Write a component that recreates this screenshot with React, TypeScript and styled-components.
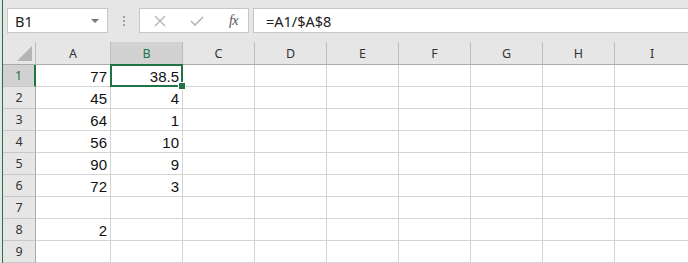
import { Fragment } from 'react'
import styled, { createGlobalStyle } from 'styled-components'

const green = '#217346'
const headerBg = '#e6e6e6'
const gridLine = '#d4d4d4'
const uiFont = `"Noto Sans", "Open Sans", "DejaVu Sans", sans-serif`
const cellFont = `"Liberation Sans", Arial, sans-serif`

const GlobalStyle = createGlobalStyle`
  html, body {
    margin: 0;
    padding: 0;
    background: ${headerBg};
    overflow: hidden;
  }
`

const Window = styled.div`
  width: 688px;
  height: 263px;
  box-sizing: border-box;
  margin-left: 2px;
  border-left: 1px solid ${green};
  background: ${headerBg};
  display: flex;
  flex-direction: column;
  overflow: hidden;
`

const FormulaBar = styled.div`
  display: flex;
  align-items: stretch;
  height: 27px;
  margin: 8px 0 9px 4px;
`

const NameBox = styled.div`
  width: 101px;
  box-sizing: border-box;
  background: #fff;
  border: 1px solid #c6c6c6;
  display: flex;
  align-items: center;
  justify-content: space-between;
  padding: 0 8px 0 7px;
  font-family: ${uiFont};
  font-size: 14.5px;
  color: #222;
`

const DropArrow = styled.span`
  width: 0;
  height: 0;
  border-left: 4px solid transparent;
  border-right: 4px solid transparent;
  border-top: 4px solid #777;
  margin-top: 1px;
`

const Grip = styled.div`
  width: 31px;
  display: flex;
  flex-direction: column;
  align-items: center;
  justify-content: center;
  gap: 2px;

  span {
    width: 2px;
    height: 2px;
    background: #a0a0a0;
  }
`

const FxBox = styled.div`
  width: 110px;
  box-sizing: border-box;
  background: #fff;
  border: 1px solid #c6c6c6;
  display: flex;
  align-items: center;
  justify-content: space-between;
  padding: 0 10px 0 14px;
`

const Fx = styled.span`
  font-family: "Liberation Serif", "DejaVu Serif", serif;
  font-style: italic;
  font-size: 14px;
  color: #555;
  letter-spacing: -0.5px;
`

const FormulaInput = styled.div`
  flex: 1;
  margin-left: 4px;
  background: #fff;
  border: 1px solid #c6c6c6;
  border-right: none;
  display: flex;
  align-items: center;
  padding-left: 12px;
  font-family: ${uiFont};
  font-size: 14.5px;
  color: #222;
`

const Sheet = styled.div`
  display: grid;
  grid-template-columns: 33px 75px repeat(7, 72px) 1fr;
  grid-auto-rows: 22px;
  grid-template-rows: 23px;
  background: #fff;
`

const Corner = styled.div`
  background: ${headerBg};
  border-right: 1px solid #bdbdbd;
  border-bottom: 1px solid #ababab;
  position: relative;

  &:after {
    content: '';
    position: absolute;
    right: 3px;
    bottom: 3px;
    width: 0;
    height: 0;
    border-left: 15px solid transparent;
    border-bottom: 15px solid #b4b4b4;
  }
`

const ColHeader = styled.div<{ $active?: boolean }>`
  background: ${p => (p.$active ? '#d2d2d2' : headerBg)};
  border-right: 1px solid #bdbdbd;
  border-bottom: ${p => (p.$active ? `2px solid ${green}` : '1px solid #ababab')};
  display: flex;
  align-items: center;
  justify-content: center;
  font-family: ${uiFont};
  font-size: 12.5px;
  color: ${p => (p.$active ? green : '#333')};
  margin-bottom: ${p => (p.$active ? '-1px' : '0')};
  z-index: ${p => (p.$active ? 1 : 0)};
`

const RowHeader = styled.div<{ $active?: boolean }>`
  background: ${p => (p.$active ? '#d2d2d2' : headerBg)};
  border-right: ${p => (p.$active ? `2px solid ${green}` : '1px solid #ababab')};
  border-bottom: 1px solid #c8c8c8;
  display: flex;
  align-items: center;
  justify-content: center;
  font-family: ${uiFont};
  font-size: 12.5px;
  color: ${p => (p.$active ? green : '#333')};
`

const Cell = styled.div<{ $selected?: boolean }>`
  position: relative;
  z-index: ${p => (p.$selected ? 2 : 0)};
  border-right: 1px solid ${gridLine};
  border-bottom: 1px solid ${gridLine};
  display: flex;
  align-items: flex-end;
  justify-content: flex-end;
  padding: 0 3px 1px 0;
  font-family: ${cellFont};
  font-size: 15px;
  color: #111;
`

const Selection = styled.div`
  position: absolute;
  left: -1px;
  top: -1px;
  right: -1px;
  bottom: -1px;
  border: 2px solid ${green};
  pointer-events: none;

  &:after {
    content: '';
    position: absolute;
    right: -5px;
    bottom: -5px;
    width: 6px;
    height: 6px;
    background: ${green};
    border: 1px solid #fff;
  }
`

const columns = ['A', 'B', 'C', 'D', 'E', 'F', 'G', 'H', 'I']
const data: Record<number, [string, string]> = {
  1: ['77', '38.5'],
  2: ['45', '4'],
  3: ['64', '1'],
  4: ['56', '10'],
  5: ['90', '9'],
  6: ['72', '3'],
  7: ['', ''],
  8: ['2', ''],
  9: ['', ''],
}

const CrossIcon = () => (
  <svg width="12" height="12" viewBox="0 0 12 12">
    <path d="M1 1 L11 11 M11 1 L1 11" stroke="#b5b5b5" strokeWidth="1.4" fill="none" />
  </svg>
)

const CheckIcon = () => (
  <svg width="14" height="12" viewBox="0 0 14 12">
    <path d="M1 6 L5 10 L13 2" stroke="#b5b5b5" strokeWidth="1.6" fill="none" />
  </svg>
)

export default function App() {
  const rows = Object.keys(data).map(Number)
  return (
    <>
      <GlobalStyle />
      <Window>
        <FormulaBar>
          <NameBox>
            B1
            <DropArrow />
          </NameBox>
          <Grip>
            <span />
            <span />
            <span />
          </Grip>
          <FxBox>
            <CrossIcon />
            <CheckIcon />
            <Fx>fx</Fx>
          </FxBox>
          <FormulaInput>=A1/$A$8</FormulaInput>
        </FormulaBar>
        <Sheet>
          <Corner />
          {columns.map(c => (
            <ColHeader key={c} $active={c === 'B'}>
              {c}
            </ColHeader>
          ))}
          {rows.map(r => (
            <Fragment key={r}>
              <RowHeader $active={r === 1}>{r}</RowHeader>
              {columns.map((c, i) => {
                const selected = r === 1 && c === 'B'
                return (
                  <Cell key={c} $selected={selected}>
                    {i < 2 ? data[r][i] : ''}
                    {selected && <Selection />}
                  </Cell>
                )
              })}
            </Fragment>
          ))}
        </Sheet>
      </Window>
    </>
  )
}
